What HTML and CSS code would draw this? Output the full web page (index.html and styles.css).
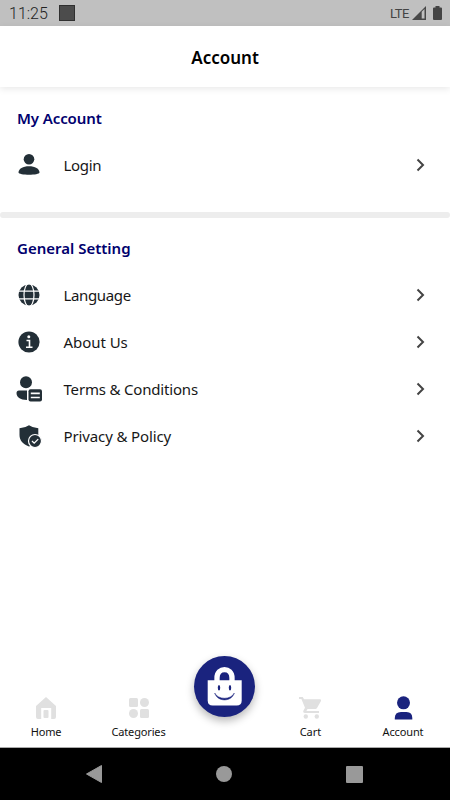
FILE: index.html
```html
<!DOCTYPE html>
<html lang="en">
<head>
<meta charset="utf-8">
<title>Account</title>
<link rel="stylesheet" href="styles.css">
</head>
<body>
<div class="screen">
  <div class="status">
    <span class="time">11:25</span><span class="square"></span>
    <span class="lte">LTE</span>
    <svg class="signal" width="14" height="14" viewBox="0 0 14 14"><path d="M0 14L14 0V14Z" fill="#484848"/><path d="M9.700 5.700L12.500 2.900V12.500H9.700Z" fill="#c0c0c0"/></svg>
    <svg class="battery" width="9" height="14" viewBox="0 0 9 14"><path d="M2.500 0h4v1.500H8q1 0 1 1V13q0 1-1 1H1q-1 0-1-1V2.500q0-1 1-1h1.500z" fill="#444"/></svg>
  </div>
  <header class="header"><h1>Account</h1></header>
  <main class="content">
    <section class="group first">
      <h2 class="my">My Account</h2>
      <div class="row">
        <svg class="icon" width="28" height="28" viewBox="0 0 28 28"><circle cx="14" cy="8.300" r="5.300"/><path d="M3.500 21.500C3.500 17.500 8 15.200 14 15.200S24.500 17.500 24.500 21.500C24.500 24.500 3.500 24.500 3.500 21.500Z"/></svg>
        <span class="label login">Login</span>
        <svg class="chevron" width="10" height="14" viewBox="0 0 10 14"><path d="M1.500 1.500L7 7L1.500 12.500"/></svg>
      </div>
    </section>
    <div class="divider"></div>
    <section class="group second">
      <h2 class="general">General Setting</h2>
      <div class="row">
        <svg class="icon" width="28" height="28" viewBox="0 0 28 28"><circle cx="14" cy="14" r="10.500"/><g fill="none" stroke="#fff" stroke-width="1.200"><ellipse cx="14" cy="14" rx="5" ry="11.500"/><path d="M3 10.200H25M3 17.800H25"/></g></svg>
        <span class="label language">Language</span>
        <svg class="chevron" width="10" height="14" viewBox="0 0 10 14"><path d="M1.500 1.500L7 7L1.500 12.500"/></svg>
      </div>
      <div class="row">
        <svg class="icon" width="28" height="28" viewBox="0 0 28 28"><circle cx="14" cy="14" r="10.600"/><circle cx="13.800" cy="8.700" r="1.500" fill="#fff"/><path d="M11.500 12.500H14.500V19M11 19.200H17.500" fill="none" stroke="#fff" stroke-width="1.600"/></svg>
        <span class="label about">About Us</span>
        <svg class="chevron" width="10" height="14" viewBox="0 0 10 14"><path d="M1.500 1.500L7 7L1.500 12.500"/></svg>
      </div>
      <div class="row">
        <svg class="icon" width="28" height="28" viewBox="0 0 28 28"><circle cx="11" cy="7.300" r="6"/><path d="M12 15.500V25C5 25 1.500 22 1.500 18Q1.500 15.500 4 15.500Z"/><rect x="13.500" y="14.300" width="13.500" height="12.200" rx="2"/><path d="M15.800 18.300H24.800M15.800 22.500H24.800" fill="none" stroke="#fff" stroke-width="1.700"/></svg>
        <span class="label terms">Terms &amp; Conditions</span>
        <svg class="chevron" width="10" height="14" viewBox="0 0 10 14"><path d="M1.500 1.500L7 7L1.500 12.500"/></svg>
      </div>
      <div class="row">
        <svg class="icon" width="28" height="28" viewBox="0 0 28 28"><path d="M14 3.200Q18 6 23.300 6.200V13C23.300 19 19.500 22.500 14 24.500C8 22 4.500 18.500 4.500 13V6.200Q10 6 14 3.200Z"/><circle cx="20" cy="19" r="6.500" stroke="#fff" stroke-width="1.200"/><path d="M17 19L19.200 21.200L23.200 17.100" fill="none" stroke="#fff" stroke-width="1.300"/></svg>
        <span class="label privacy">Privacy &amp; Policy</span>
        <svg class="chevron" width="10" height="14" viewBox="0 0 10 14"><path d="M1.500 1.500L7 7L1.500 12.500"/></svg>
      </div>
    </section>
  </main>
  <nav class="tabs">
    <div class="tab"><svg width="24" height="24" viewBox="0 0 24 24"><path d="M12 1L22 10V21Q22 23 20 23H17.200V12H7.200V23H4Q2 23 2 21V10Z"/><rect x="9.500" y="14" width="5" height="8" rx="1"/></svg><span class="home">Home</span></div>
    <div class="tab"><svg width="24" height="24" viewBox="0 0 24 24"><rect x="2" y="2" width="9" height="9" rx="1.500"/><circle cx="17.500" cy="6.500" r="4.500"/><circle cx="6.500" cy="17.500" r="4.500"/><rect x="13" y="13" width="9" height="9" rx="1.500"/></svg><span class="categories">Categories</span></div>
    <div class="bag"><svg width="61" height="61" viewBox="0 0 61 61"><path d="M23 26V22C23 10.800 38 10.800 38 22V26" fill="none" stroke="#fff" stroke-width="5.300"/><path d="M13.700 24.200H47.700V44.500Q47.700 49.500 42.700 49.500H18.700Q13.700 49.500 13.700 44.500Z" fill="#fff"/><path d="M26.300 24V22C26.300 16 34.700 16 34.700 22V24Z"/><ellipse cx="25" cy="31.800" rx="1.200" ry="2.700"/><ellipse cx="36" cy="31.800" rx="1.200" ry="2.700"/><path d="M20.700 37C23.500 46.200 37.500 46.200 40.300 37C37 44 24 44 20.700 37Z" stroke="#1a237e" stroke-width=".5"/></svg></div>
    <div class="tab"><svg width="24" height="24" viewBox="0 0 24 24"><path d="M0 1H3.800L5 3.300H21Q22.500 3.300 22 5L18 12Q17.500 13 16.300 13H8.500L7.400 15H20V17H6C4.300 17 3.800 15.700 4.500 14.500L6 11.700L2.400 3H0Z"/><circle cx="6.800" cy="20.500" r="2.200"/><circle cx="17.800" cy="20.500" r="2.200"/></svg><span class="cart">Cart</span></div>
    <div class="tab active"><svg width="24" height="24" viewBox="0 0 24 24"><circle cx="12.500" cy="6.800" r="6.500"/><path d="M3.800 23.500V22Q3.800 16 10 16H15.500Q21.300 16 21.300 22V23.500Z"/></svg><span class="profile">Account</span></div>
  </nav>
  <div class="system">
    <svg width="16" height="18" viewBox="0 0 16 18"><path d="M.5 9L15.500 .5V17.500Z" stroke="#999" stroke-linejoin="round"/></svg>
    <svg width="16" height="16" viewBox="0 0 16 16"><circle cx="8" cy="8" r="8"/></svg>
    <svg width="17" height="17" viewBox="0 0 17 17"><rect width="17" height="17" rx="1"/></svg>
  </div>
</div>
</body>
</html>
```
FILE: styles.css
```css
* { box-sizing: border-box; }
body { margin: 0; background: #fff; font-family: "Noto Sans", sans-serif; }
h1, h2 { margin: 0; white-space: nowrap; }
svg { display: block; flex: none; }
.screen { width: 450px; height: 800px; display: flex; flex-direction: column; overflow: hidden; color: #171717; }
.status { height: 26px; flex: none; background: #c0c0c0; display: flex; align-items: center; padding: 0 8px 0 9px; font-family: Roboto, sans-serif; color: #444; }
.time { font-size: 16px; width: 50px; line-height: 20px; padding-top: 2px; font-weight: 300; color: #222; }
.square { width: 16px; height: 16px; background: #4c4c4c; border: 1px solid #303030; }
.lte { margin-left: auto; font-size: 13px; letter-spacing: -.5px; margin-right: 3px; }
.battery { margin-left: 7px; }
.header { height: 61px; flex: none; display: flex; align-items: center; justify-content: center; background: #fff; box-shadow: 0 2px 7px rgba(0, 0, 0, .09); }
h1 { font-size: 17px; line-height: 24px; font-weight: 600; color: #000; padding-top: 2px; }
.content { flex: 1; min-height: 0; }
.group { padding: 19px 25px 0 17px; }
.first { height: 125px; }
.second { padding-top: 18px; }
h2 { font-size: 15px; line-height: 24px; color: #00006e; font-weight: 600; margin-bottom: 11px; }
.my { letter-spacing: -.1px; }
.divider { height: 6px; background: #ededed; border-radius: 3px; }
.row { height: 47px; display: flex; align-items: center; }
.icon { fill: #232f37; margin: 1px 0 0 -2px; }
.label { margin-left: 20.5px; flex: 1; font-size: 15px; line-height: 22px; white-space: nowrap; }
.login { letter-spacing: -.3px; }
.language { letter-spacing: -.35px; }
.about { letter-spacing: -.05px; }
.terms { letter-spacing: -.18px; }
.privacy { letter-spacing: -.12px; }
.chevron { fill: none; stroke: #444; stroke-width: 2; margin: 1px -1px 0 0; }
.tabs { height: 93px; flex: none; border-bottom: 1px solid #aaa; display: grid; grid-template-columns: 92px 93px 80px 91px 94px; align-items: end; }
.tab { height: 51px; display: flex; flex-direction: column; align-items: center; fill: #e0e0e0; font-size: 11px; line-height: 16px; color: #111; }
.tab span { margin-top: 4px; }
.home { letter-spacing: -.2px; }
.categories, .profile { letter-spacing: -.15px; }
.active { fill: #1a237e; }
.bag { align-self: start; justify-self: center; width: 61px; height: 61px; margin: 1px 1px 0 0; border-radius: 50%; background: #1a237e; fill: #1a237e; box-shadow: 0 4px 8px rgba(0, 0, 0, .28); }
.system { height: 52px; flex: none; background: #000; fill: #999; display: flex; align-items: center; justify-content: space-between; padding: 0 87px 0 86px; }
```
